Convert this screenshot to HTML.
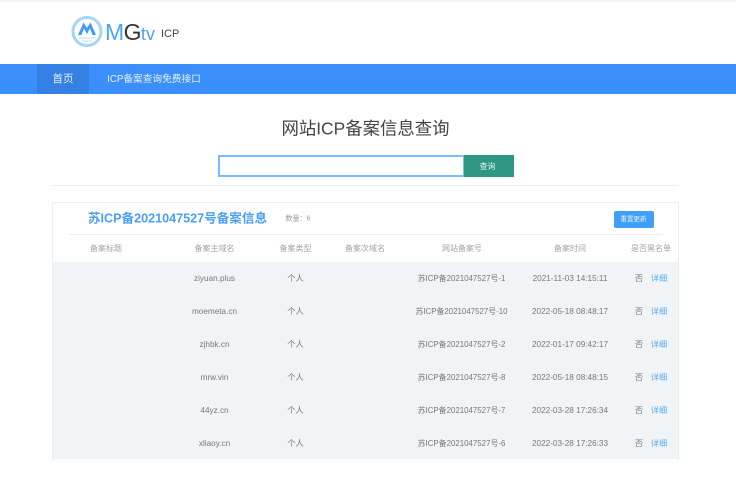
<!DOCTYPE html>
<html lang="zh">
<head>
<meta charset="utf-8">
<title>网站ICP备案信息查询</title>
<style>
html,body{margin:0;padding:0;background:#fff}
body{width:736px;height:479px;overflow:hidden;position:relative;font-family:"Liberation Sans","Noto Sans CJK SC",sans-serif;color:#666}
.a{position:absolute;white-space:nowrap}
.c{position:absolute;white-space:nowrap;transform:translate(-50%,-50%);line-height:1}
.h{font-size:8px;color:#a3a3a3}
.d{font-size:8.2px;color:#777;margin-top:1px}
.r{font-size:7.900px;color:#777;margin-top:1px}
.l{color:#5aa9f5}
</style>
</head>
<body>
<div class="a" style="left:0;top:0;width:736px;height:2px;background:#f5f5f5"></div>

<svg class="a" style="left:70px;top:14px" width="36" height="36" viewBox="0 0 36 36">
<circle cx="17" cy="17.500" r="14" fill="#fff" stroke="#a5d5f8" stroke-width="3"/>
<path d="M8 21 L13.500 8.500 L17 14 L20.500 8.500 L26 21 L22.500 21 L20 14.500 L17 20 L14 14.500 L11.500 21 Z" fill="#3f9cf0"/>
<path d="M9 24 H25 M12 27 H22" stroke="#cbe4f7" stroke-width="1.200"/>
</svg>
<div class="a" style="left:105px;top:17px;font-size:23px;line-height:30px;letter-spacing:-.6px;color:#4aa5f5">M<span style="color:#333">G</span><span style="font-size:18px;letter-spacing:.2px">tv</span></div>
<div class="a" style="left:161px;top:27px;font-size:11px;line-height:14px;color:#444">ICP</div>

<div class="a" style="left:0;top:64px;width:736px;height:30px;background:#3a8ffc"></div>
<div class="a" style="left:37px;top:64px;width:52px;height:30px;background:#3580e4"></div>
<div class="c" style="left:63px;top:79px;font-size:10.500px;color:#e8f1fd">首页</div>
<div class="c" style="left:154px;top:79.500px;font-size:9.700px;color:#e8f1fd">ICP备案查询免费接口</div>

<div class="c" style="left:365.500px;top:129px;font-size:17.400px;color:#444">网站ICP备案信息查询</div>

<div class="a" style="left:217.500px;top:155px;width:243px;height:18px;border:2px solid #78bcfb;background:#fff"></div>
<div class="a" style="left:464px;top:155px;width:50px;height:22px;background:#2f9683"></div>
<div class="c" style="left:487.500px;top:167px;font-size:8px;color:#e4f3f0">查询</div>

<div class="a" style="left:52px;top:185px;width:626px;height:1px;background:#eee"></div>

<div class="a" style="left:52px;top:202px;width:625px;height:257px;border:1px solid #eee;border-bottom:0;background:#fff"></div>
<div class="a" style="left:53px;top:262px;width:625px;height:197px;background:#f1f4f6"></div>
<div class="a" style="left:69px;top:234px;width:593px;height:1px;background:#eee"></div>

<div class="c" style="left:177.500px;top:219px;font-size:12.600px;font-weight:bold;color:#4a9ff5">苏ICP备2021047527号备案信息</div>
<div class="c" style="left:298px;top:218.500px;font-size:7px;color:#999">数量：6</div>
<div class="a" style="left:614px;top:211px;width:40px;height:17px;border-radius:2px;background:#3fa0fb"></div>
<div class="c" style="left:633.500px;top:219.500px;font-size:6.500px;color:#e6f3ff">重置更新</div>

<div class="c h" style="left:106px;top:249px">备案标题</div>
<div class="c h" style="left:214.500px;top:249px">备案主域名</div>
<div class="c h" style="left:295.500px;top:249px">备案类型</div>
<div class="c h" style="left:365px;top:249px">备案次域名</div>
<div class="c h" style="left:462px;top:249px">网站备案号</div>
<div class="c h" style="left:570px;top:249px">备案时间</div>
<div class="c h" style="left:651px;top:249px">是否黑名单</div>

<div class="c d" style="left:214.500px;top:278px">ziyuan.plus</div><div class="c d" style="left:295.500px;top:278px">个人</div><div class="c r" style="left:461.500px;top:278px">苏ICP备2021047527号-1</div><div class="c d" style="left:570px;top:278px">2021-11-03 14:15:11</div><div class="c d" style="left:639px;top:278px">否</div><div class="c d l" style="left:659px;top:278px">详细</div>

<div class="c d" style="left:214.500px;top:311px">moemeta.cn</div><div class="c d" style="left:295.500px;top:311px">个人</div><div class="c r" style="left:461.500px;top:311px">苏ICP备2021047527号-10</div><div class="c d" style="left:570px;top:311px">2022-05-18 08:48:17</div><div class="c d" style="left:639px;top:311px">否</div><div class="c d l" style="left:659px;top:311px">详细</div>

<div class="c d" style="left:214.500px;top:344px">zjhbk.cn</div><div class="c d" style="left:295.500px;top:344px">个人</div><div class="c r" style="left:461.500px;top:344px">苏ICP备2021047527号-2</div><div class="c d" style="left:570px;top:344px">2022-01-17 09:42:17</div><div class="c d" style="left:639px;top:344px">否</div><div class="c d l" style="left:659px;top:344px">详细</div>

<div class="c d" style="left:214.500px;top:377px">mrw.vin</div><div class="c d" style="left:295.500px;top:377px">个人</div><div class="c r" style="left:461.500px;top:377px">苏ICP备2021047527号-8</div><div class="c d" style="left:570px;top:377px">2022-05-18 08:48:15</div><div class="c d" style="left:639px;top:377px">否</div><div class="c d l" style="left:659px;top:377px">详细</div>

<div class="c d" style="left:214.500px;top:410px">44yz.cn</div><div class="c d" style="left:295.500px;top:410px">个人</div><div class="c r" style="left:461.500px;top:410px">苏ICP备2021047527号-7</div><div class="c d" style="left:570px;top:410px">2022-03-28 17:26:34</div><div class="c d" style="left:639px;top:410px">否</div><div class="c d l" style="left:659px;top:410px">详细</div>

<div class="c d" style="left:214.500px;top:443px">xliaoy.cn</div><div class="c d" style="left:295.500px;top:443px">个人</div><div class="c r" style="left:461.500px;top:443px">苏ICP备2021047527号-6</div><div class="c d" style="left:570px;top:443px">2022-03-28 17:26:33</div><div class="c d" style="left:639px;top:443px">否</div><div class="c d l" style="left:659px;top:443px">详细</div>
</body>
</html>
